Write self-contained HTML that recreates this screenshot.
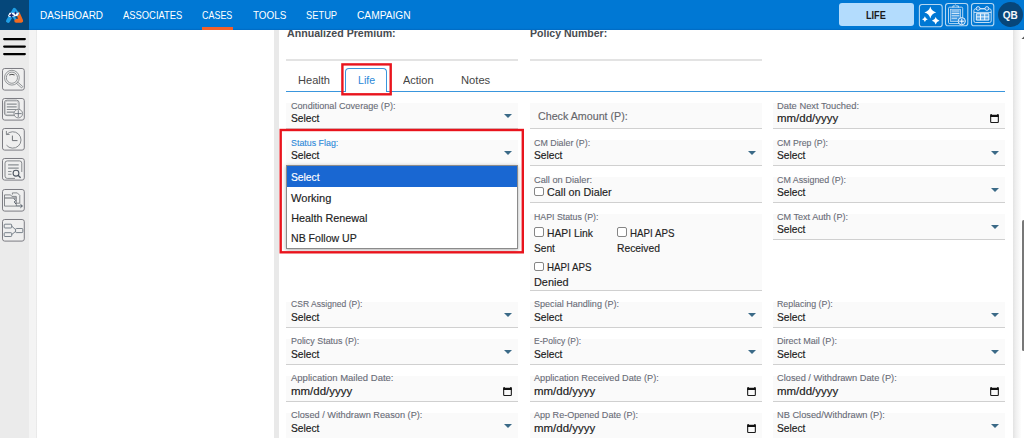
<!DOCTYPE html>
<html lang="en">
<head>
<meta charset="utf-8">
<title>Cases - Life</title>
<style>
*{box-sizing:border-box;margin:0;padding:0}
html,body{width:1024px;height:438px;overflow:hidden;background:#fff;font-family:"Liberation Sans",sans-serif;color:#222}
.abs{position:absolute}
.hdr,.tab,.ni,.l,.v,.ct,.sx{transform-origin:0 0}
.sx{display:inline-block}
#nav{position:absolute;left:0;top:0;width:1024px;height:29.8px;background:linear-gradient(to bottom,#0078d4 28.4px,#006dc6 28.9px);z-index:20}
#logo{position:absolute;left:0;top:0;width:29.2px;height:29.8px;background:#05477a}
.ni{position:absolute;top:0;height:30px;line-height:30.6px;color:#fff;font-size:10.9px;white-space:nowrap}
#cases-ul{position:absolute;left:201.9px;top:27.3px;width:30.9px;height:2.5px;background:#f4602a}
#lifebtn{position:absolute;left:839px;top:2.9px;width:75.2px;height:23.5px;background:#b3dcfd;border-radius:3px;color:#1b1b1b;font-weight:bold;font-size:10.2px;text-align:center;line-height:25.3px}
.tb{position:absolute;top:3.4px;width:23.3px;height:23.3px}
.tb svg{position:absolute;left:0;top:0;width:23.3px;height:23.3px;overflow:visible}
#qb{position:absolute;left:997.8px;top:2.4px;width:24.8px;height:25px;border-radius:50%;background:#07467a;color:#f4f7fa;font-weight:bold;font-size:10px;line-height:28.4px}
#side{position:absolute;left:0;top:29px;width:37px;height:409px;background:linear-gradient(90deg,#ebebeb 0,#ebebeb 28.5px,#f4f4f4 29.4px,#f4f4f4 35.6px,#e6e6e6 36.8px,#fff 37px)}
.hb{position:absolute;left:3px;width:23px;height:2.4px;border-radius:1.2px;background:#000}
.sb{position:absolute;left:2.1px;width:22.8px;height:22.6px}
.sb svg{position:absolute;left:0;top:0;width:22.8px;height:22.6px;overflow:visible}
#lbar{position:absolute;left:273.6px;top:29px;width:5.5px;height:409px;background:#e9e9e9}
#rbar{position:absolute;left:1012.6px;top:29px;width:8px;height:409px;background:linear-gradient(90deg,#e3e3e3,#efefef 35%,#f7f7f7 70%,#fdfdfd)}
.hdr{position:absolute;top:26.5px;font-weight:bold;font-size:11.2px;line-height:13px;color:#474b50;white-space:nowrap}
.hl{position:absolute;top:59.4px;height:1.3px;background:#e3e3e3}
.tab{position:absolute;top:74.1px;font-size:11.2px;line-height:13px;color:#454545;white-space:nowrap}
#tabline{position:absolute;left:286.3px;top:90.9px;width:718.5px;height:1.1px;background:#3a96dd}
#lifetab{position:absolute;left:345px;top:67.9px;width:42.3px;height:24px;border:1.1px solid #3a96dd;border-bottom:none;border-radius:4px 4px 0 0;background:#fff}
.red{position:absolute;border:2.4px solid #e9141d}
.f{position:absolute;width:231.6px;height:29px;background:linear-gradient(to bottom,rgba(250,250,250,0) 3.4px,#fafafa 3.4px);border-bottom:1px solid #d0d0d0}
.f .l{position:absolute;left:4.3px;top:0.2px;font-size:9.8px;color:#686b76;white-space:nowrap;line-height:11px}
.f .v{position:absolute;left:4.3px;top:12px;font-size:10.4px;color:#191919;white-space:nowrap;line-height:13px}
.f .ar{position:absolute;right:6.1px;top:13.6px;width:0;height:0;border-left:4.55px solid transparent;border-right:4.55px solid transparent;border-top:4.6px solid #3b6a87}
.f .cal{position:absolute;right:5.8px;top:13.6px;width:9px;height:9.3px}
.v,.ct,#dd div{-webkit-text-stroke:.15px currentColor}
.l{-webkit-text-stroke:.1px currentColor}
.c1{left:286.4px}.c2{left:530px;width:232px}.c3{left:773.3px}
.lo .l{top:-0.8px}.lo .v{top:11.8px}
.c3 .l,.c3 .v{left:3.8px}
.cb{position:absolute;width:10px;height:9.8px;border:1px solid #858585;border-radius:2px;background:#fff}
.ct{position:absolute;font-size:11.2px;color:#222;white-space:nowrap;line-height:13px}
#dd{position:absolute;left:286.4px;top:165.2px;width:232px;height:83.7px;background:#fff;border:1px solid #8b8b8b;box-shadow:0 1px 4px rgba(0,0,0,.32);z-index:5}
#dd div{height:20.3px;line-height:23px;padding-left:3.8px;font-size:10.8px;color:#222;white-space:nowrap}
#dd div.sel{background:#1967d2;color:#fff;height:20.65px;line-height:23.7px}
</style>
</head>
<body>
<div id="side">
  <svg class="abs" style="left:0;top:0.8px" width="30" height="30" viewBox="0 0 30 30"><path d="M4.2,9.05H24.8M4.2,16.6H24.8M4.2,24.1H24.8" stroke="#000" stroke-width="2.3" stroke-linecap="round"/></svg>
  <div class="sb" style="top:38.9px"><svg viewBox="0 0 22.8 22.6"><rect x=".5" y=".5" width="21.8" height="21.6" rx="2.2" fill="#efefef" stroke="#7b7b82" stroke-width="1"/><g fill="none" stroke="#74777c" stroke-width=".75"><circle cx="9.9" cy="9.7" r="7.4"/><circle cx="9.9" cy="9.7" r="5.6"/><path d="M14.4,15.3L19.6,19.9L20.8,18.6L15.6,14"/><path d="M7.2,7Q9.9,5.7 12.6,7" stroke="#4a4a4a" stroke-width="1"/></g></svg></div>
  <div class="sb" style="top:69.0px"><svg viewBox="0 0 22.8 22.6"><rect x=".5" y=".5" width="21.8" height="21.6" rx="2.2" fill="#efefef" stroke="#7b7b82" stroke-width="1"/><g fill="none" stroke="#74777c"><rect x="2.4" y="2.2" width="14.7" height="15.4" rx="2.6" stroke-width=".8"/><rect x="3.4" y="3.2" width="12.7" height="13.4" rx="1.8" stroke-width=".5" stroke="#9a9ca0"/><path d="M4.8,6.2H14.7M4.8,8.8H14.7M4.8,11.5H14.7M4.8,14.2H12" stroke="#8b9094" stroke-width="1.2"/><circle cx="16.3" cy="15.6" r="4.3" fill="#efefef" stroke-width=".8"/><path d="M16.3,12.2V19M12.9,15.6H19.7" stroke-width=".8" stroke="#5d6670"/></g></svg></div>
  <div class="sb" style="top:99.2px"><svg viewBox="0 0 22.8 22.6"><rect x=".5" y=".5" width="21.8" height="21.6" rx="2.2" fill="#efefef" stroke="#7b7b82" stroke-width="1"/><g fill="none" stroke="#74777c" stroke-width=".85"><path d="M4.6,6.6A8.2,8.2 0 1 1 4.5,17.2"/><path d="M4.4,3V6.5H7.6"/><path d="M10.4,7.6V12.6H15.5" stroke="#676a70" stroke-width=".95"/></g></svg></div>
  <div class="sb" style="top:129.3px"><svg viewBox="0 0 22.8 22.6"><rect x=".5" y=".5" width="21.8" height="21.6" rx="2.2" fill="#efefef" stroke="#7b7b82" stroke-width="1"/><g fill="none" stroke="#74777c" stroke-width=".85"><path d="M19.8,14V5.2Q19.8,2.9 17.5,2.9H5.3Q3,2.9 3,5.2V18.1Q3,20.4 5.3,20.4H13"/><path d="M6.1,6.9H16.7M6.1,10.1H16.7" stroke="#8b9094" stroke-width="1.3"/><path d="M6.1,13.5H9.5M6.1,16.3H9.5" stroke="#8b9094" stroke-width="1.1"/><circle cx="14" cy="15.2" r="2.9" stroke="#4d5661" stroke-width="1.1"/><path d="M16.1,17.3L18.6,19.8" stroke="#4d5661" stroke-width="1.3"/></g></svg></div>
  <div class="sb" style="top:159.5px"><svg viewBox="0 0 22.8 22.6"><rect x=".5" y=".5" width="21.8" height="21.6" rx="2.2" fill="#efefef" stroke="#7b7b82" stroke-width="1"/><g fill="none" stroke="#74777c" stroke-width=".85"><path d="M10.4,5.6V3.9H15.3L17.8,6.4V14.2H14.4"/><path d="M2.5,17.1V5.9H8.6L9.8,7.4H14.3V17.1Z"/><path d="M2.5,9H14.3" stroke-width="1.1"/><path d="M12,9.5L13.6,11.5L12.4,13L14,15" stroke="#4d5661" stroke-width="1"/><path d="M14.3,17H20.3M18.4,15.2L20.4,17L18.4,18.8" stroke="#4d5661" stroke-width=".95"/></g></svg></div>
  <div class="sb" style="top:189.7px"><svg viewBox="0 0 22.8 22.6"><rect x=".5" y=".5" width="21.8" height="21.6" rx="2.2" fill="#efefef" stroke="#7b7b82" stroke-width="1"/><g fill="none" stroke="#6c7680" stroke-width=".9"><rect x="2.2" y="5.2" width="7.5" height="3.8" rx=".8"/><rect x="2.2" y="13.7" width="7.5" height="3.8" rx=".8"/><rect x="13.6" y="9.5" width="7.2" height="4.1" rx=".8"/><path d="M9.7,7.1L13.6,10.7M9.7,15.6L13.6,12.4"/></g></svg></div>
</div>
<div id="lbar"></div>
<div id="rbar"></div>

<div class="hdr" style="transform:scaleX(0.95);left:286.5px">Annualized Premium:</div>
<div class="hdr" style="transform:scaleX(0.941);left:530.3px">Policy Number:</div>
<div class="hl" style="left:286.4px;width:231.6px"></div>
<div class="hl" style="left:529.9px;width:231.9px"></div>

<div id="tabline"></div>
<div id="lifetab"></div>
<div class="tab" style="transform:scaleX(0.989);left:298.1px">Health</div>
<div class="tab" style="transform:scaleX(0.948);left:358px;color:#2b88d8">Life</div>
<div class="tab" style="transform:scaleX(0.981);left:402.6px">Action</div>
<div class="tab" style="transform:scaleX(0.999);left:460.7px">Notes</div>


<!-- row 1 -->
<div class="f c1" style="top:100px"><span class="l" style="transform:scaleX(0.927);">Conditional Coverage (P):</span><span class="v" style="transform:scaleX(0.983);">Select</span><i class="ar"></i></div>
<div class="f c2" style="top:100px"><span class="v" style="transform:scaleX(0.956);left:7.8px;top:9.5px;font-size:11.2px;color:#66666a">Check Amount (P):</span></div>
<div class="f c3" style="top:100px"><span class="l" style="transform:scaleX(0.956);">Date Next Touched:</span><span class="v" style="transform:scaleX(1.104);">mm/dd/yyyy</span><svg class="cal" viewBox="0 0 9 9.3"><rect x="0.65" y="1.3" width="7.7" height="7.3" rx="1.1" fill="none" stroke="#1c1c1c" stroke-width="1.1"/><rect x="0.2" y="0.9" width="8.6" height="2.2" rx="0.6" fill="#111"/><rect x="0.3" y="0.1" width="1.6" height="1.6" rx="0.5" fill="#111"/><rect x="7.1" y="0.1" width="1.6" height="1.6" rx="0.5" fill="#111"/></svg></div>

<!-- row 2 -->
<div class="f c1" style="top:137px"><span class="l" style="transform:scaleX(0.905);color:#2b88d8">Status Flag:</span><span class="v" style="transform:scaleX(0.983);">Select</span><i class="ar"></i></div>
<div class="f c2" style="top:137px"><span class="l" style="transform:scaleX(0.904);">CM Dialer (P):</span><span class="v" style="transform:scaleX(0.983);">Select</span><i class="ar"></i></div>
<div class="f c3" style="top:137px"><span class="l" style="transform:scaleX(0.892);">CM Prep (P):</span><span class="v" style="transform:scaleX(0.983);">Select</span><i class="ar"></i></div>

<!-- row 3 -->
<div class="f c2" style="top:174px"><span class="l" style="transform:scaleX(0.943);">Call on Dialer:</span><i class="cb" style="left:3.5px;top:12.5px"></i><span class="ct" style="transform:scaleX(0.963);left:16.5px;top:12.2px">Call on Dialer</span></div>
<div class="f c3" style="top:174px"><span class="l" style="transform:scaleX(0.905);">CM Assigned (P):</span><span class="v" style="transform:scaleX(0.983);">Select</span><i class="ar"></i></div>

<!-- row 4 -->
<div class="f c2" style="top:211px;height:80px"><span class="l" style="transform:scaleX(0.896);">HAPI Status (P):</span>
  <i class="cb" style="left:3.5px;top:16.4px"></i><span class="ct" style="transform:scaleX(0.923);left:17px;top:16px">HAPI Link</span>
  <span class="ct" style="transform:scaleX(0.908);left:4.1px;top:30.8px">Sent</span>
  <i class="cb" style="left:86.8px;top:16.4px"></i><span class="ct" style="transform:scaleX(0.871);left:99.9px;top:16px">HAPI APS</span>
  <span class="ct" style="transform:scaleX(0.922);left:87.3px;top:30.8px">Received</span>
  <i class="cb" style="left:3.5px;top:50.5px"></i><span class="ct" style="transform:scaleX(0.871);left:17px;top:49.6px">HAPI APS</span>
  <span class="ct" style="transform:scaleX(0.973);left:4.1px;top:64.7px">Denied</span>
</div>
<div class="f c3" style="top:211px"><span class="l" style="transform:scaleX(0.927);">CM Text Auth (P):</span><span class="v" style="transform:scaleX(0.983);">Select</span><i class="ar"></i></div>

<!-- row 5 -->
<div class="f c1 lo" style="top:299px"><span class="l" style="transform:scaleX(0.875);">CSR Assigned (P):</span><span class="v" style="transform:scaleX(0.983);">Select</span><i class="ar"></i></div>
<div class="f c2 lo" style="top:299px"><span class="l" style="transform:scaleX(0.924);">Special Handling (P):</span><span class="v" style="transform:scaleX(0.983);">Select</span><i class="ar"></i></div>
<div class="f c3 lo" style="top:299px"><span class="l" style="transform:scaleX(0.899);">Replacing (P):</span><span class="v" style="transform:scaleX(0.983);">Select</span><i class="ar"></i></div>

<!-- row 6 -->
<div class="f c1 lo" style="top:336px"><span class="l" style="transform:scaleX(0.909);">Policy Status (P):</span><span class="v" style="transform:scaleX(0.983);">Select</span><i class="ar"></i></div>
<div class="f c2 lo" style="top:336px"><span class="l" style="transform:scaleX(0.867);">E-Policy (P):</span><span class="v" style="transform:scaleX(0.983);">Select</span><i class="ar"></i></div>
<div class="f c3 lo" style="top:336px"><span class="l" style="transform:scaleX(0.925);">Direct Mail (P):</span><span class="v" style="transform:scaleX(0.983);">Select</span><i class="ar"></i></div>

<!-- row 7 -->
<div class="f c1 lo" style="top:373px"><span class="l" style="transform:scaleX(0.97);">Application Mailed Date:</span><span class="v" style="transform:scaleX(1.104);">mm/dd/yyyy</span><svg class="cal" viewBox="0 0 9 9.3"><rect x="0.65" y="1.3" width="7.7" height="7.3" rx="1.1" fill="none" stroke="#1c1c1c" stroke-width="1.1"/><rect x="0.2" y="0.9" width="8.6" height="2.2" rx="0.6" fill="#111"/><rect x="0.3" y="0.1" width="1.6" height="1.6" rx="0.5" fill="#111"/><rect x="7.1" y="0.1" width="1.6" height="1.6" rx="0.5" fill="#111"/></svg></div>
<div class="f c2 lo" style="top:373px"><span class="l" style="transform:scaleX(0.935);">Application Received Date (P):</span><span class="v" style="transform:scaleX(1.104);">mm/dd/yyyy</span><svg class="cal" viewBox="0 0 9 9.3"><rect x="0.65" y="1.3" width="7.7" height="7.3" rx="1.1" fill="none" stroke="#1c1c1c" stroke-width="1.1"/><rect x="0.2" y="0.9" width="8.6" height="2.2" rx="0.6" fill="#111"/><rect x="0.3" y="0.1" width="1.6" height="1.6" rx="0.5" fill="#111"/><rect x="7.1" y="0.1" width="1.6" height="1.6" rx="0.5" fill="#111"/></svg></div>
<div class="f c3 lo" style="top:373px"><span class="l" style="transform:scaleX(0.944);">Closed / Withdrawn Date (P):</span><span class="v" style="transform:scaleX(1.104);">mm/dd/yyyy</span><svg class="cal" viewBox="0 0 9 9.3"><rect x="0.65" y="1.3" width="7.7" height="7.3" rx="1.1" fill="none" stroke="#1c1c1c" stroke-width="1.1"/><rect x="0.2" y="0.9" width="8.6" height="2.2" rx="0.6" fill="#111"/><rect x="0.3" y="0.1" width="1.6" height="1.6" rx="0.5" fill="#111"/><rect x="7.1" y="0.1" width="1.6" height="1.6" rx="0.5" fill="#111"/></svg></div>

<!-- row 8 -->
<div class="f c1 lo" style="top:410px"><span class="l" style="transform:scaleX(0.939);">Closed / Withdrawn Reason (P):</span><span class="v" style="transform:scaleX(0.983);">Select</span><i class="ar"></i></div>
<div class="f c2 lo" style="top:410px"><span class="l" style="transform:scaleX(0.923);">App Re-Opened Date (P):</span><span class="v" style="transform:scaleX(1.104);">mm/dd/yyyy</span><svg class="cal" viewBox="0 0 9 9.3"><rect x="0.65" y="1.3" width="7.7" height="7.3" rx="1.1" fill="none" stroke="#1c1c1c" stroke-width="1.1"/><rect x="0.2" y="0.9" width="8.6" height="2.2" rx="0.6" fill="#111"/><rect x="0.3" y="0.1" width="1.6" height="1.6" rx="0.5" fill="#111"/><rect x="7.1" y="0.1" width="1.6" height="1.6" rx="0.5" fill="#111"/></svg></div>
<div class="f c3 lo" style="top:410px"><span class="l" style="transform:scaleX(0.944);">NB Closed/Withdrawn (P):</span><span class="v" style="transform:scaleX(0.983);">Select</span><i class="ar"></i></div>

<!-- dropdown -->
<div id="dd"><div class="sel"><span class="sx" style="transform:scaleX(0.953);">Select</span></div><div><span class="sx" style="transform:scaleX(1.025);">Working</span></div><div><span class="sx" style="transform:scaleX(1);">Health Renewal</span></div><div><span class="sx" style="transform:scaleX(0.979);">NB Follow UP</span></div></div>
<svg class="abs" style="left:0;top:0;z-index:6" width="1024" height="438" viewBox="0 0 1024 438"><g fill="none" stroke="#e9141d" stroke-width="2.4"><rect x="342.4" y="64.4" width="48.3" height="29.9"/><rect x="280.7" y="130" width="242.1" height="122.3"/></g></svg>

<!-- scrollbar -->
<div class="abs" style="left:1021.9px;top:220.3px;width:3.2px;height:131.1px;background:#777;border-radius:1.6px"></div>
<svg class="abs" style="left:1020px;top:35px" width="4" height="5" viewBox="0 0 4 5"><path d="M1.5,3.9L4,1.5V3.9Z" fill="#555"/></svg>


<div id="nav">
  <div id="logo"><svg viewBox="0 0 29.2 29.8" width="29.2" height="29.8" style="position:absolute;left:0;top:0"><path d="M18.1,13.8L21.2,20.8H16.2" stroke="#f26b21" stroke-width="3.9" stroke-linecap="round" stroke-linejoin="round" fill="none"/><path d="M8,20.9L14.4,9.9L17.2,13.6" stroke="#1f9fe6" stroke-width="3.9" stroke-linecap="round" stroke-linejoin="round" fill="none"/><path d="M13.6,16.5L14.9,18.6" stroke="#1f9fe6" stroke-width="2.2" stroke-linecap="round" fill="none"/><path d="M9.6,12.8H19.2L17.3,15.9L9.9,17L7.9,16Z" fill="#fff"/><path d="M11.5,12.7l.9,1.7 1.9.9-1.9.9-.9,1.8-.9-1.8-1.9-.9 1.9-.9z" fill="#1b2a72"/><path d="M15.5,11.2l.7,1.2 1.4.6-1.4.6-.7,1.3-.7-1.3-1.4-.6 1.4-.6z" fill="#1b2a72"/></svg></div>
  <span class="ni" style="transform:scaleX(0.914);left:39.7px">DASHBOARD</span>
  <span class="ni" style="transform:scaleX(0.863);left:122.7px">ASSOCIATES</span>
  <span class="ni" style="transform:scaleX(0.821);left:202.4px">CASES</span>
  <span class="ni" style="transform:scaleX(0.907);left:252.8px">TOOLS</span>
  <span class="ni" style="transform:scaleX(0.856);left:305.9px">SETUP</span>
  <span class="ni" style="transform:scaleX(0.937);left:357.2px">CAMPAIGN</span>
  <div id="cases-ul"></div>
  <div id="lifebtn"><span class="sx" style="transform:scaleX(0.897);position:absolute;left:27.3px;top:0">LIFE</span></div>
  <div class="tb" style="left:919.3px;top:4.1px"><svg viewBox="0 0 23.3 23.3"><rect x=".4" y=".5" width="22.8" height="22.3" rx="2.6" fill="none" stroke="#fff" stroke-opacity=".7" stroke-width="1.1"/><g fill="#fff"><path d="M11.30,2.60 Q12.48,7.32 17.20,8.50 Q12.48,9.68 11.30,14.40 Q10.12,9.68 5.40,8.50 Q10.12,7.32 11.30,2.60Z"/><path d="M5.90,12.30 Q6.48,14.62 8.80,15.20 Q6.48,15.78 5.90,18.10 Q5.32,15.78 3.00,15.20 Q5.32,14.62 5.90,12.30Z"/><path d="M16.70,12.90 Q17.46,15.94 20.50,16.70 Q17.46,17.46 16.70,20.50 Q15.94,17.46 12.90,16.70 Q15.94,15.94 16.70,12.90Z"/></g></svg></div>
  <div class="tb" style="left:944.8px"><svg viewBox="0 0 23.3 23.3"><rect x=".5" y=".5" width="22.3" height="22.3" rx="2.6" fill="none" stroke="#fff" stroke-opacity=".7" stroke-width="1.1"/><g fill="none" stroke="#e6f1fb" stroke-width=".8"><rect x="3.5" y="4.2" width="14.2" height="16.4" rx="1.2"/><rect x="5.5" y="6.2" width="10.2" height="12.3" fill="#3f97df" stroke-width=".6"/><path d="M7.9,4.6V2.9H9.6Q10.6,.9 11.7,2.9H13.4V4.6" /><path d="M6.6,8H14.4M6.6,10.4H14.4M6.6,12.8H14.4M6.6,15.2H12" stroke="#cfe6f9" stroke-width="1.1"/><circle cx="16.8" cy="18.2" r="3.6" fill="#1b7fd6" stroke="#fff" stroke-width=".9"/><path d="M16.8,15.6V20.8M14.2,18.2H19.4" stroke="#fff" stroke-width="1"/></g></svg></div>
  <div class="tb" style="left:971px"><svg viewBox="0 0 23.3 23.3"><rect x=".5" y=".5" width="22.3" height="22.3" rx="2.6" fill="none" stroke="#fff" stroke-opacity=".7" stroke-width="1.1"/><g fill="none" stroke="#e6f1fb" stroke-width=".85"><rect x="2.9" y="5.9" width="17.3" height="13.6" rx="1.6"/><path d="M2.9,9.4H20.2"/><path d="M9,5.6H14"/><circle cx="7.1" cy="5.5" r="1.9" fill="#2a86d8"/><circle cx="15.9" cy="5.5" r="1.9" fill="#2a86d8"/><rect x="5.3" y="10.7" width="12.6" height="6.4" fill="#5aa8e6" stroke="none"/><path d="M5.3,10.7H17.9V17.1H5.3ZM9.5,10.7V17.1M13.7,10.7V17.1M5.3,13.9H17.9" stroke="#fff" stroke-width=".9"/></g></svg></div>
  <div id="qb"><span class="sx" style="transform:scaleX(1);position:absolute;left:5px;top:0">QB</span></div>
</div>
</body>
</html>
